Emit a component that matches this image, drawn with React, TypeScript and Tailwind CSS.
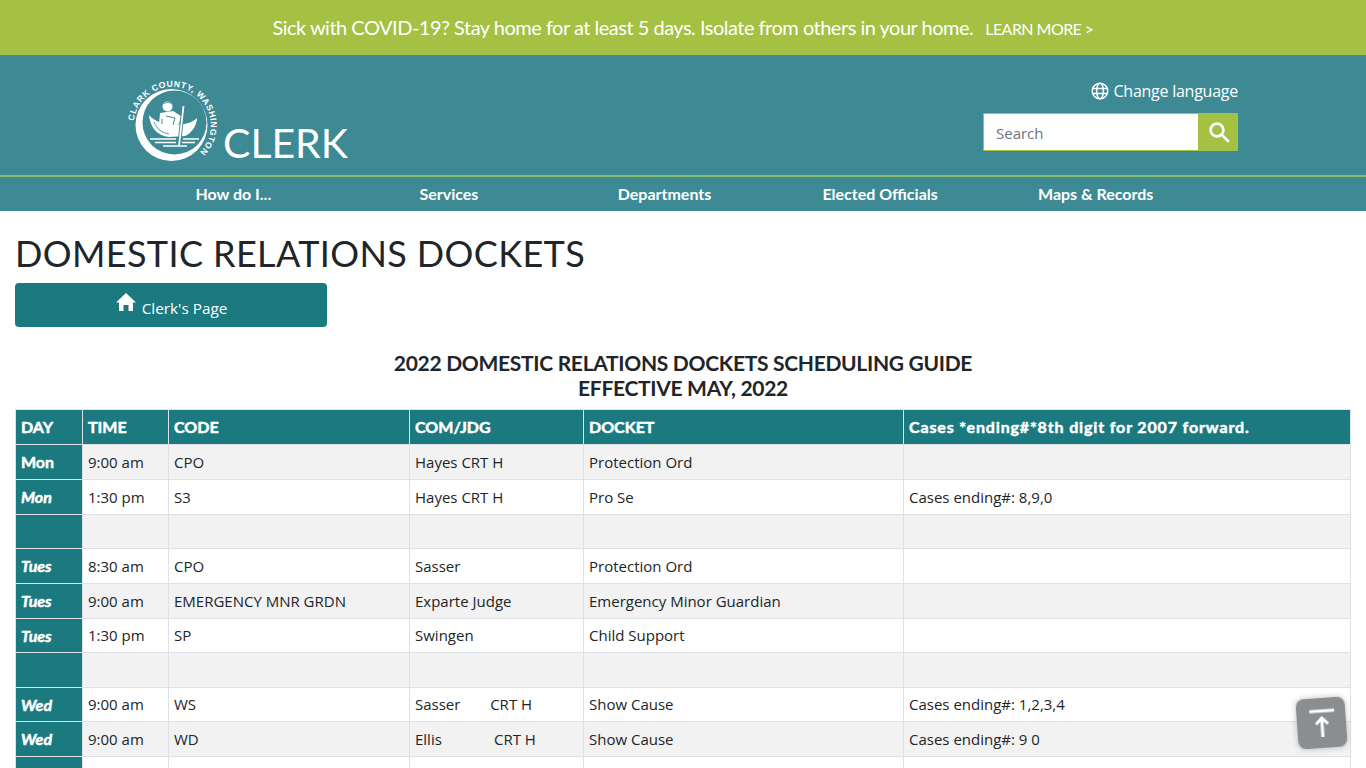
import React from "react";

const sans = "font-['Open_Sans','Noto_Sans',sans-serif]";

type Row = { d: string; i?: boolean; h: string; c: string[] };
const rows: Row[] = [
  { d: "Mon", h: "h-[35px]", c: ["9:00 am", "CPO", "Hayes CRT H", "Protection Ord", ""] },
  { d: "Mon", i: true, h: "h-[35px]", c: ["1:30 pm", "S3", "Hayes CRT H", "Pro Se", "Cases ending#: 8,9,0"] },
  { d: "", h: "h-[34px]", c: ["", "", "", "", ""] },
  { d: "Tues", i: true, h: "h-[35px]", c: ["8:30 am", "CPO", "Sasser", "Protection Ord", ""] },
  { d: "Tues", i: true, h: "h-[35px]", c: ["9:00 am", "EMERGENCY MNR GRDN", "Exparte Judge", "Emergency Minor Guardian", ""] },
  { d: "Tues", i: true, h: "h-[34px]", c: ["1:30 pm", "SP", "Swingen", "Child Support", ""] },
  { d: "", h: "h-[35px]", c: ["", "", "", "", ""] },
  { d: "Wed", i: true, h: "h-[34px]", c: ["9:00 am", "WS", "Sasser\u00a0\u00a0\u00a0\u00a0\u00a0\u00a0\u2009 CRT H", "Show Cause", "Cases ending#: 1,2,3,4"] },
  { d: "Wed", i: true, h: "h-[35px]", c: ["9:00 am", "WD", "Ellis\u00a0\u00a0\u00a0\u00a0\u00a0\u00a0\u00a0\u00a0\u00a0\u00a0\u00a0\u00a0\u200a CRT H", "Show Cause", "Cases ending#: 9 0"] },
  { d: "", h: "h-[35px]", c: ["", "", "", "", ""] },
];

const heads = ["DAY", "TIME", "CODE", "COM/JDG", "DOCKET"];
const widths = ["w-[67px]", "w-[86px]", "w-[241px]", "w-[174px]", "w-[320px]", "w-[447px]"];
const navItems = ["How do I...", "Services", "Departments", "Elected Officials", "Maps & Records"];
const heavy = "font-['Lato',sans-serif] font-bold [-webkit-text-stroke:0.5px_#fff] text-[16px]";

function Logo() {
  const teal = "#3e8a94";
  return (
    <svg width="92" height="92" viewBox="0 0 92 92" className="shrink-0 overflow-visible">
      <defs>
        <path id="ring" d="M 9 46 A 38.5 38.5 0 1 1 75 77" fill="none" />
      </defs>
      <text fill="#fff" fontSize="8.6" fontWeight="700" fontFamily="'Liberation Sans',sans-serif">
        <textPath href="#ring" textLength="146" lengthAdjust="spacing">CLARK COUNTY, WASHINGTON</textPath>
      </text>
      <circle cx="46.5" cy="50" r="36" fill="#fff" />
      <circle cx="49.5" cy="47.5" r="32" fill={teal} />
      <path d="M24 40 C25 52 32 61 44 62 L60 61 C67 58 72 50 72 43 C67 48 60 49 52 50 C40 50 30 47 24 40Z" fill="#fff" />
      <path d="M29 47 C32 54 37 58 44 59" stroke={teal} strokeWidth="0.9" fill="none" />
      <circle cx="42.5" cy="31.5" r="5" fill="#fff" />
      <path d="M39 29 C41 27 45 27 46.5 29" stroke={teal} strokeWidth="0.9" fill="none" />
      <path d="M35 38 L48 36 L56 41 L54 49 L47 53 L34 49Z" fill="#fff" />
      <path d="M41 41 L50 43 L48 50 M37 44 L37 49" stroke={teal} strokeWidth="1" fill="none" />
      <path d="M58.5 31 L54 71" stroke={teal} strokeWidth="3.6" />
      <path d="M58.5 31 L54 71" stroke="#fff" strokeWidth="1.8" />
      <path d="M25 64 H51 M58 64 H74 M30 67.5 H51 M57 67.5 H70 M38 71 H62" stroke="#fff" strokeWidth="1.3" />
    </svg>
  );
}

export default function App() {
  return (
    <div className={`h-screen overflow-hidden bg-white ${sans} text-[#212529]`}>
      <div className="h-[55px] bg-[#a4c144] flex items-center justify-center text-white font-['Lato',sans-serif] pb-[2px]">
        <span className="text-[20px] tracking-[-0.5px]">Sick with COVID-19? Stay home for at least 5 days. Isolate from others in your home.</span>
        <span className="text-[16px] tracking-[-0.55px] ml-3 mt-[4px]">LEARN MORE &gt;</span>
      </div>

      <header className="h-[120px] bg-[#3e8a94] flex justify-between pl-[125px] pr-[128px]">
        <div className="flex items-end pb-[8px]">
          <Logo />
          <span className="font-['Lato',sans-serif] text-white text-[41px] leading-[50px] ml-[6px] -mb-px">CLERK</span>
        </div>
        <div className="flex flex-col items-end pt-[24px]">
          <div className="flex items-center gap-[5px] text-white text-[16px] tracking-[-0.25px] leading-6">
            <svg width="18" height="18" viewBox="0 0 18 18" fill="none" stroke="#fff" strokeWidth="1.5">
              <circle cx="9" cy="9" r="7.8" />
              <ellipse cx="9" cy="9" rx="3.4" ry="7.8" />
              <path d="M1.5 6.4H16.5M1.5 11.6H16.5" />
            </svg>
            <span>Change language</span>
          </div>
          <div className="flex mt-[10px] w-[255px] h-[38px]">
            <div className="flex-1 bg-white border border-[#a4c144] flex items-center pl-3 pt-[2px] text-[15px] text-[#6c757d]">Search</div>
            <div className="w-[39px] bg-[#a4c144] flex items-center justify-center">
              <svg width="22" height="22" viewBox="0 0 22 22" fill="none" stroke="#fff" strokeWidth="2.6" strokeLinecap="round">
                <circle cx="9" cy="9" r="6.4" />
                <path d="M14 14L20 20" />
              </svg>
            </div>
          </div>
        </div>
      </header>

      <nav className="h-[36px] bg-[#3e8a94] border-t-2 border-[#86c06f] text-white text-[16px] font-['Lato',sans-serif] font-bold">
        <div className="ml-[125.5px] w-[1078px] h-full grid grid-cols-5 items-center text-center">
          {navItems.map((n) => (
            <span key={n}>{n}</span>
          ))}
        </div>
      </nav>

      <main className="px-[15px]">
        <h1 className="font-['Lato',sans-serif] text-[36px] tracking-[0.38px] leading-[43px] mt-[21px] text-[#212529]">DOMESTIC RELATIONS DOCKETS</h1>
        <div className="mt-[8px] w-[312px] h-[44px] rounded bg-[#1a7a80] text-white text-[15.3px] flex items-center justify-center gap-[5px]">
          <svg width="22" height="20" viewBox="0 0 22 20" fill="#fff" className="-mt-[7px]">
            <path d="M11 1 L21 10.5 L18 10.5 L18 19 L13.5 19 L13.5 13 L8.5 13 L8.5 19 L4 19 L4 10.5 L1 10.5Z" />
          </svg>
          <span className="mt-[7px]">Clerk's Page</span>
        </div>

        <div className="mt-[23px] text-center font-['Lato',sans-serif] font-bold text-[21px] tracking-[-0.3px] leading-[25px] text-[#212529]">
          2022 DOMESTIC RELATIONS DOCKETS SCHEDULING GUIDE
          <br />
          EFFECTIVE MAY, 2022
        </div>

        <table className="mt-[9px] w-[1335px] table-fixed border-collapse text-[15px]">
          <colgroup>
            {widths.map((w) => (
              <col key={w} className={w} />
            ))}
          </colgroup>
          <thead>
            <tr className="h-[35px] bg-[#1a7a80] text-white">
              {heads.map((h) => (
                <th key={h} className={`border border-[#dee2e6] px-[5px] text-left whitespace-nowrap ${heavy}`}>{h}</th>
              ))}
              <th className={`border border-[#dee2e6] px-[5px] text-left whitespace-nowrap tracking-[0.85px] ${heavy}`}>Cases *ending#*8th digit for 2007 forward.</th>
            </tr>
          </thead>
          <tbody>
            {rows.map((r, n) => (
              <tr key={n} className={`${r.h} ${n % 2 === 0 ? "bg-[#f2f2f2]" : "bg-white"}`}>
                <td className={`border border-[#dee2e6] bg-[#1a7a80] text-white px-[5px] ${heavy} ${r.i ? "italic" : ""}`}>{r.d}</td>
                {r.c.map((t, k) => (
                  <td key={k} className="border border-[#dee2e6] px-[5px] whitespace-nowrap">{t}</td>
                ))}
              </tr>
            ))}
          </tbody>
        </table>
      </main>

      <div className="fixed left-[1297px] top-[698px] w-[49px] h-[50px] rounded-lg bg-[#8b8e90] rotate-[-4deg] shadow-[0_0_6px_rgba(0,0,0,0.25)] flex items-center justify-center">
        <svg width="30" height="34" viewBox="0 0 30 34" fill="none" stroke="#fff" strokeWidth="3">
          <path d="M3 5H28" />
          <path d="M15 31V13M9 18L15 12L21 18" />
        </svg>
      </div>
    </div>
  );
}
